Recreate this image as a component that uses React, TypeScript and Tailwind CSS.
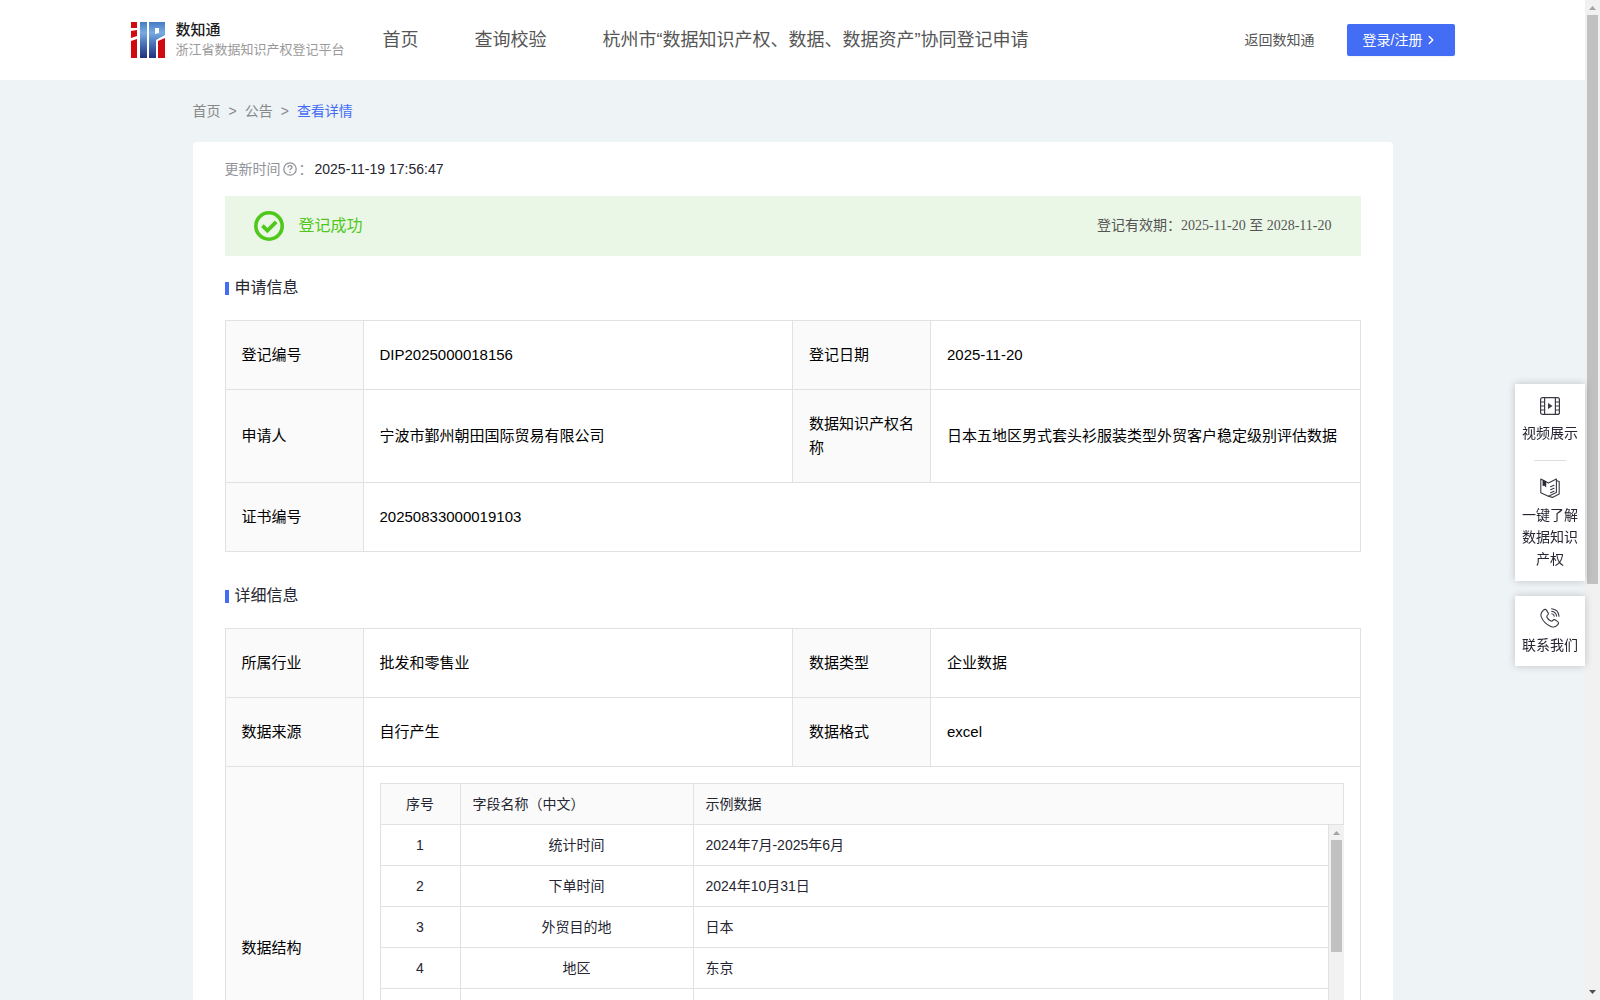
import React from "react";
import { ChevronRight } from "lucide-react";

type Field = { label: string; value: string };

const applyRows: Field[][] = [
    [
        { label: "登记编号", value: "DIP2025000018156" },
        { label: "登记日期", value: "2025-11-20" },
    ],
    [
        { label: "申请人", value: "宁波市鄞州朝田国际贸易有限公司" },
        { label: "数据知识产权名称", value: "日本五地区男式套头衫服装类型外贸客户稳定级别评估数据" },
    ],
    [{ label: "证书编号", value: "20250833000019103" }],
];

const detailRows: Field[][] = [
    [
        { label: "所属行业", value: "批发和零售业" },
        { label: "数据类型", value: "企业数据" },
    ],
    [
        { label: "数据来源", value: "自行产生" },
        { label: "数据格式", value: "excel" },
    ],
];

const structure = [
    { name: "统计时间", sample: "2024年7月-2025年6月" },
    { name: "下单时间", sample: "2024年10月31日" },
    { name: "外贸目的地", sample: "日本" },
    { name: "地区", sample: "东京" },
    { name: "", sample: "" },
    { name: "", sample: "" },
    { name: "", sample: "" },
];

const Logo = () => (
    <svg width="34" height="36" viewBox="0 0 34 36" aria-hidden="true">
        <defs>
            <linearGradient id="logoBlue" gradientUnits="userSpaceOnUse" x1="0" y1="0" x2="0" y2="36">
                <stop offset="0" stopColor="#447cc4" />
                <stop offset="0.3" stopColor="#78abe2" />
                <stop offset="0.6" stopColor="#4a73b8" />
                <stop offset="1" stopColor="#22307f" />
            </linearGradient>
        </defs>
        <path fill="#d10a10" d="M0 0h6v6H0zM0 9l6 -1v6l-6 2zM0 19l6 -2v19H0zM27 19l7 -3v20h-7z" />
        <path fill="url(#logoBlue)" fillRule="evenodd" d="M9 0h7v36H9zM18 0h16v13l-9 5v18h-7zM24 6v6l4 -1V6z" />
    </svg>
);

const VideoIcon = () => (
    <svg width="20" height="20" viewBox="0 0 20 20" fill="none" stroke="#3a3a44" strokeWidth="1.2" aria-hidden="true">
        <rect x="0.6" y="1.6" width="18.8" height="16.8" rx="2" />
        <path d="M4.6 2v16M15.4 2v16M1 6h3.6M1 10h3.6M1 14h3.6M15.4 6H19M15.4 10H19M15.4 14H19" />
        <path d="M8 7l4.6 3L8 13z" fill="#3a3a44" stroke="none" />
    </svg>
);

const BookIcon = () => (
    <svg width="20" height="20" viewBox="0 0 20 20" fill="none" stroke="#3a3a44" strokeWidth="1.1" strokeLinejoin="round" strokeLinecap="round" aria-hidden="true">
        <path d="M0.8 1L8.4 5L16.4 1v13.4L8.4 18.2L0.8 14.8z" />
        <path d="M16.8 2.8l2.4 0.8v12.4L12.4 19.4l-4 -1.2" />
        <path d="M10.6 8.8l3.4 -1.6M10.6 11.8l3.4 -1.6M10.6 14.8l3.4 -1.6" />
        <path d="M2.6 1.6l3.6 1.8v6L4.4 7.8L2.6 8z" fill="#2a2a33" stroke="none" />
    </svg>
);

const PhoneIcon = () => (
    <svg width="20" height="20" viewBox="0 0 20 20" fill="none" stroke="#3a3a44" strokeWidth="1.1" strokeLinejoin="round" strokeLinecap="round" aria-hidden="true">
        <path d="M3.4 2.2C4.6 1 5.8 1.2 6.6 2.4L8 4.6C8.6 5.6 8.4 6.6 7.4 7.4C6.6 8 6.6 8.6 7.2 9.6C8 11 9 12 10.4 12.8C11.4 13.4 12 13.4 12.6 12.6C13.4 11.6 14.4 11.4 15.4 12L17.4 13.4C18.8 14.4 18.8 15.4 17.8 16.6C16 18.8 13.6 19.6 10.8 18.4C6.2 16.4 2.8 13 1.2 8.6C0.4 6.2 1.2 4 3.4 2.2z" />
        <path d="M11.6 0.8c4.2 0.4 7 3.2 7.4 7.4M11.6 3.2c2.8 0.4 4.6 2.2 5 5M11.8 5.8c1.4 0.2 2.2 1 2.4 2.4" />
    </svg>
);

const SuccessIcon = () => (
    <svg width="30" height="30" viewBox="0 0 30 30" fill="none" stroke="#4fc71b" aria-hidden="true">
        <circle cx="15" cy="15" r="13.2" strokeWidth="3.6" />
        <path d="M8.4 14.6l5 5l8.8 -8.8" strokeWidth="3.8" />
    </svg>
);

const QuestionIcon = () => (
    <svg width="14" height="14" viewBox="0 0 14 14" fill="none" stroke="#909399" aria-hidden="true">
        <circle cx="7" cy="7" r="6.2" strokeWidth="1.3" />
        <path d="M5 5.6C5 4.4 5.8 3.7 7 3.7S9 4.4 9 5.5C9 6.8 7 6.8 7 8.3" strokeWidth="1.3" />
        <circle cx="7" cy="10.2" r="0.8" fill="#909399" stroke="none" />
    </svg>
);

const Arrow = ({ down }: { down?: boolean }) => (
    <svg width="15" height="15" viewBox="0 0 15 15" className="shrink-0" aria-hidden="true">
        <path d={down ? "M4 5h7l-3.5 4z" : "M4 10h7l-3.5 -4z"} fill={down ? "#505050" : "#a3a3a3"} />
    </svg>
);

const SectionTitle = ({ children }: { children: React.ReactNode }) => (
    <h2 className="flex items-center gap-1.5 text-base leading-6 text-[#252631]">
        <span className="h-[13px] w-1 bg-[#446df6]" />
        {children}
    </h2>
);

const labelCell = "border border-[#e1e1e1] bg-[#fafafa] px-4 py-[22px] text-left font-normal";
const valueCell = "border border-[#e1e1e1] px-4 py-[22px]";

const InfoTable = ({ rows, children }: { rows: Field[][]; children?: React.ReactNode }) => (
    <table className="mt-5 w-full table-fixed border-collapse text-[15px] leading-6 text-black">
        <colgroup>
            <col className="w-[138px]" />
            <col />
            <col className="w-[138px]" />
            <col />
        </colgroup>
        <tbody>
            {rows.map((row) => (
                <tr key={row[0].label}>
                    {row.map((field) => (
                        <React.Fragment key={field.label}>
                            <th scope="row" className={labelCell}>{field.label}</th>
                            <td colSpan={row.length === 1 ? 3 : 1} className={valueCell}>{field.value}</td>
                        </React.Fragment>
                    ))}
                </tr>
            ))}
            {children}
        </tbody>
    </table>
);

const StructureTable = () => (
    <div className="flex h-[329px] flex-col text-sm leading-5 text-[#252631]">
        <table className="w-full table-fixed border-collapse">
            <thead>
                <tr className="h-[41px] bg-[#fafafa]">
                    <th className="w-20 border border-[#e1e1e1] font-normal">序号</th>
                    <th className="w-[233px] border border-[#e1e1e1] px-3 text-left font-normal">字段名称（中文）</th>
                    <th className="border border-[#e1e1e1] px-3 text-left font-normal">示例数据</th>
                </tr>
            </thead>
        </table>
        <div className="flex min-h-0 flex-1">
            <div className="min-w-0 flex-1 overflow-hidden">
                <table className="w-full table-fixed border-collapse">
                    <tbody>
                        {structure.map((item, i) => (
                            <tr key={i} className="h-[41px] first:h-10">
                                <td className="w-20 border border-t-0 border-[#e1e1e1] text-center">{item.name && i + 1}</td>
                                <td className="w-[233px] border border-t-0 border-[#e1e1e1] text-center">{item.name}</td>
                                <td className="border border-t-0 border-[#e1e1e1] px-3">{item.sample}</td>
                            </tr>
                        ))}
                    </tbody>
                </table>
            </div>
            <div className="flex w-[15px] flex-col justify-between bg-[#f1f1f1]">
                <div>
                    <Arrow />
                    <div className="mx-auto h-28 w-[11px] bg-[#c1c1c1]" />
                </div>
                <Arrow down />
            </div>
        </div>
    </div>
);

const Header = () => (
    <header className="bg-white px-4">
        <div className="mx-auto flex h-20 max-w-[1324px] items-center">
            <a href="#" className="flex items-center gap-[11px]">
                <Logo />
                <span className="flex flex-col">
                    <span className="text-[15px] leading-5 font-medium text-[#1d1d1f]">数知通</span>
                    <span className="text-[13px] leading-5 text-[#9a9a9a]">浙江省数据知识产权登记平台</span>
                </span>
            </a>
            <nav className="ml-[38px] flex gap-14 text-lg leading-7 text-[#555555]">
                <a href="#">首页</a>
                <a href="#">查询校验</a>
                <a href="#">杭州市“数据知识产权、数据、数据资产”协同登记申请</a>
            </nav>
            <div className="ml-auto flex items-center gap-8 text-sm">
                <a href="#" className="text-[#555555]">返回数知通</a>
                <button type="button" className="flex h-8 w-[108px] items-center gap-0.5 rounded-xs bg-[#446df6] pl-4 text-white shadow-xs">
                    登录/注册
                    <ChevronRight size={14} strokeWidth={2.5} />
                </button>
            </div>
        </div>
    </header>
);

const SideTools = () => (
    <aside className="fixed top-[384px] right-[15px] flex w-[70px] flex-col gap-[15px] text-center text-sm leading-[22px] text-[#252631]">
        <div className="flex flex-col items-center bg-white px-1.5 pt-3 pb-[11px] shadow-[0_0_8px_rgba(0,0,0,0.2)]">
            <a href="#" className="flex flex-col items-center gap-1.5">
                <VideoIcon />
                视频展示
            </a>
            <span className="mt-4 mb-[17px] h-px w-8 bg-[#dddddd]" />
            <a href="#" className="flex flex-col items-center gap-1.5">
                <BookIcon />
                一键了解数据知识产权
            </a>
        </div>
        <a href="#" className="flex flex-col items-center gap-1.5 bg-white px-1.5 pt-3 pb-2.5 shadow-[0_0_8px_rgba(0,0,0,0.2)]">
            <PhoneIcon />
            联系我们
        </a>
    </aside>
);

const App = () => {
    return (
        <div className="flex h-screen bg-[#eef3f6] font-['Liberation_Sans','Noto_Sans_CJK_SC',sans-serif]">
            <div className="min-w-0 flex-1 overflow-hidden">
                <Header />
                <main className="mx-auto max-w-[1200px]">
                    <nav className="flex gap-2 py-5 text-sm leading-[22px] text-[#888888]">
                        <a href="#">首页</a>
                        <span>&gt;</span>
                        <a href="#">公告</a>
                        <span>&gt;</span>
                        <span className="text-[#446df6]">查看详情</span>
                    </nav>
                    <div className="rounded-sm bg-white px-8 pt-4 pb-8">
                        <p className="flex items-center text-sm leading-[22px] text-[#909399]">
                            更新时间
                            <span className="ml-0.5"><QuestionIcon /></span>
                            <span className="ml-0.5">：</span>
                            <span className="ml-0.5 text-[#252631]">2025-11-19 17:56:47</span>
                        </p>
                        <div className="mt-4 flex h-[60px] items-center bg-[#ebf7e6] px-[29px]">
                            <SuccessIcon />
                            <span className="ml-[15px] text-base text-[#4fc71b]">登记成功</span>
                            <span className="ml-auto font-['Liberation_Serif','Noto_Sans_CJK_SC',serif] text-sm text-[#555555]">
                                登记有效期：
                                <span>2025-11-20 至 2028-11-20</span>
                            </span>
                        </div>
                        <section className="mt-5">
                            <SectionTitle>申请信息</SectionTitle>
                            <InfoTable rows={applyRows} />
                        </section>
                        <section className="mt-8">
                            <SectionTitle>详细信息</SectionTitle>
                            <InfoTable rows={detailRows}>
                                <tr>
                                    <th scope="row" className={labelCell}>数据结构</th>
                                    <td colSpan={3} className="border border-[#e1e1e1] p-4">
                                        <StructureTable />
                                    </td>
                                </tr>
                            </InfoTable>
                        </section>
                    </div>
                </main>
            </div>
            <div className="flex w-[15px] flex-col bg-[#f1f1f1]">
                <Arrow />
                <div className="flex-1">
                    <div className="mx-auto h-[58.7%] w-[11px] bg-[#c1c1c1]" />
                </div>
                <Arrow down />
            </div>
            <SideTools />
        </div>
    );
};

export default App;
